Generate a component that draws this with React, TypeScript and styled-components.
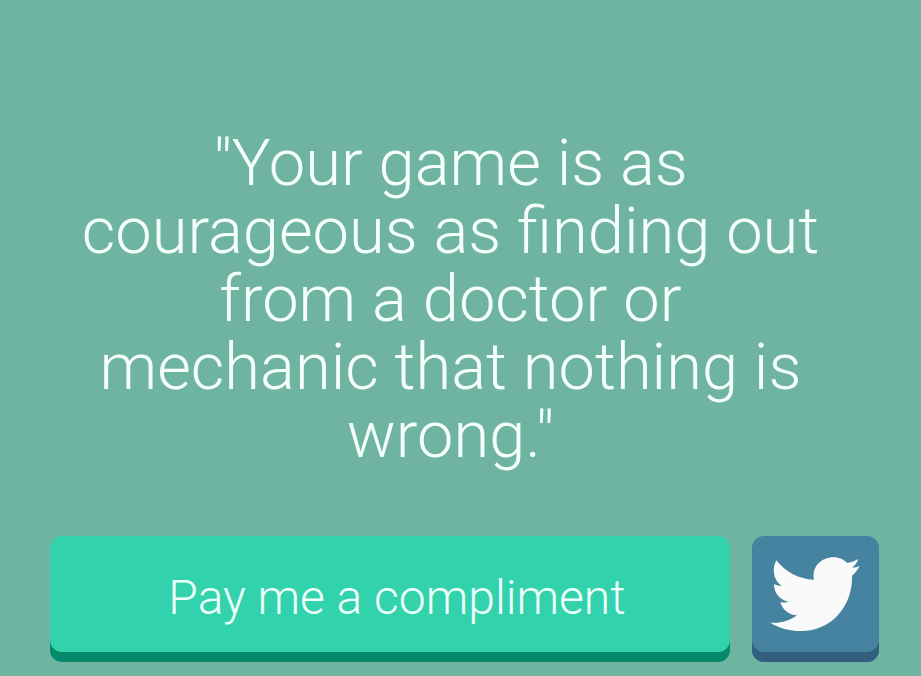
import React from "react";
import styled, { createGlobalStyle } from "styled-components";

const GlobalStyle = createGlobalStyle`
  *, *::before, *::after { box-sizing: border-box; }
  body {
    margin: 0;
    background: #6fb4a0;
    color: #f4fffc;
    font-family: Roboto, "Open Sans", sans-serif;
    font-weight: 300;
  }
`;

const Page = styled.main`
  display: flex;
  flex-direction: column;
  gap: 67px;
  padding: 129px 42px 14px 50px;
`;

const Quote = styled.h1`
  margin: 0;
  padding: 0 58px 0 30px;
  font-size: 65px;
  line-height: 68px;
  font-weight: 300;
  text-align: center;
`;

const Actions = styled.div`
  display: flex;
  gap: 22px;
`;

const Button = styled.button<{ $face: string; $edge: string }>`
  display: flex;
  align-items: center;
  justify-content: center;
  flex: 0 0 127px;
  height: 126px;
  padding: 0 2px 10px 0;
  border: 0;
  border-radius: 12px;
  background: ${(p) => p.$face};
  box-shadow: inset 0 -10px 0 ${(p) => p.$edge};
  color: #fafafa;
  font: inherit;
  cursor: pointer;
`;

const ComplimentButton = styled(Button)`
  flex: 1;
  padding: 0 0 4px 14px;
  color: #effffb;
  font-size: 48px;
`;

function Bird() {
  return (
    <svg width="90" height="76" viewBox="90 92 270 228" fill="currentColor" aria-hidden="true">
      <path d="M109 105C137 141 177 162 222 163C214 124 245 96 280 96C298 96 312 103 322 113C334 111 345 107 355 101C351 112 345 121 336 127C344 127 352 125 359 122C353 133 346 143 336 151C339 240 276 317 183 317C148 317 117 308 91 292C121 295 148 287 171 270C147 269 128 254 121 231C129 232 137 232 145 229C118 223 102 203 102 176C109 180 117 182 125 182C100 165 95 131 109 105Z" />
    </svg>
  );
}

export default function App() {
  return (
    <>
      <GlobalStyle />
      <Page>
        <Quote>
          "Your game is as courageous as finding out from a doctor or mechanic that nothing is wrong."
        </Quote>
        <Actions>
          <ComplimentButton type="button" $face="#32d3ac" $edge="#048a6a">
            Pay me a compliment
          </ComplimentButton>
          <Button type="button" aria-label="Share on Twitter" $face="#4583a0" $edge="#315f7d">
            <Bird />
          </Button>
        </Actions>
      </Page>
    </>
  );
}
